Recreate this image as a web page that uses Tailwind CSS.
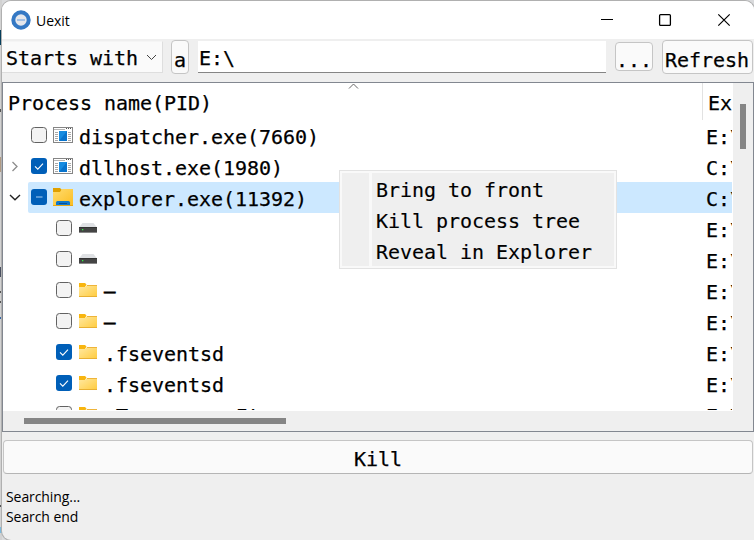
<!DOCTYPE html>
<html lang="en">
<head>
<meta charset="utf-8">
<title>Uexit</title>
<script src="https://cdn.jsdelivr.net/npm/@tailwindcss/browser@4"></script>
</head>
<body class="w-[754px] h-[540px] overflow-hidden bg-[#d9dadc] text-black">
<svg class="absolute w-0 h-0">
  <symbol id="off" viewBox="0 0 16 16"><rect x=".5" y=".5" width="15" height="15" rx="3" fill="#f3f3f3" stroke="#626262"/></symbol>
  <symbol id="on" viewBox="0 0 16 16"><rect width="16" height="16" rx="3" fill="#005fb8"/><path d="M4 8.300l2.800 2.800L12 5.700" fill="none" stroke="#fff" stroke-width="1.100"/></symbol>
  <symbol id="part" viewBox="0 0 16 16"><rect width="16" height="16" rx="3" fill="#005fb8"/><path d="M5 8h6.500" stroke="#a9cdf0" stroke-width="1.200"/></symbol>
  <symbol id="app" viewBox="0 0 20 16"><rect x=".5" y=".5" width="19" height="15" fill="#fff" stroke="#858585"/><path d="M1 2.500h11" stroke="#b5b5b5"/><path d="M13 1.500h1M15 1.500h1M17 1.500h1" stroke="#555"/><path d="M2 5.500h3M2 7.500h3M2 9.500h3M2 11.500h3M2 13.500h3M15 5.500h3M15 7.500h3M15 9.500h3M15 11.500h3M15 13.500h3" stroke="#a8a8a8"/><rect x="6" y="4" width="8" height="10" fill="#168be0"/><path d="M14 4v10H6z" fill="#0873cc"/></symbol>
  <linearGradient id="g" x1="0" y1="0" x2="1" y2="1"><stop offset="0" stop-color="#ffe9a3"/><stop offset="1" stop-color="#ffcb3d"/></linearGradient>
  <linearGradient id="g2" x1="0" y1="0" x2="1" y2="1"><stop offset="0" stop-color="#ffdc70"/><stop offset="1" stop-color="#fbbd20"/></linearGradient>
  <symbol id="folder" viewBox="0 0 18 14"><path d="M0 0h6l1.500 1.500L6 4H0z" fill="#f8b50f"/><path d="M0 4h6l2-2h10v12H0z" fill="url(#g)"/><path d="M8 2.500h10" stroke="#eeb43a"/><path d="M0 13.500h18" stroke="#e8b033"/></symbol>
  <symbol id="exp" viewBox="0 0 20 18"><path d="M0 0h7l2 2-2 3H0z" fill="#e0a000"/><path d="M0 4h7l2-3h11v17H0z" fill="url(#g2)"/><path d="M0 17.500h20" stroke="#e8a815"/><path d="M3 17v-2.500q0-1.500 1.500-1.500h11q1.500 0 1.500 1.500V17z" fill="#0f78cc"/><path d="M6 15.500h8" stroke="#0a4f91"/></symbol>
  <symbol id="drive" viewBox="0 0 18 10"><path d="M3.500 0h11L18 4.500H0z" fill="#dfe1e4"/><rect y="4" width="18" height="6" fill="#444"/><path d="M0 9.500h18" stroke="#888"/><path d="M0 4.500h18" stroke="#333"/><rect x="3" y="6" width="1.300" height="1.300" fill="#35f045"/></symbol>
</svg>
<div class="relative flex w-[754px] h-[540px]">
  <div class="w-[2px] shrink-0 flex flex-col bg-[#d2d2d2]">
    <div class="h-[30px]"></div><div class="h-[15px] bg-[#063e5b]"></div><div class="h-[64px]"></div><div class="h-[3px] bg-[#555]"></div><div class="h-[45px]"></div><div class="h-[15px] bg-[#b09a83]"></div><div class="h-[95px]"></div><div class="h-[10px] bg-[#4b5060]"></div><div class="h-[14px]"></div><div class="h-[2px] bg-[#555]"></div><div class="h-[8px]"></div><div class="h-[2px] bg-[#555]"></div><div class="h-[14px]"></div><div class="h-[2px] bg-[#3565a5]"></div><div class="h-[186px]"></div><div class="h-[2px] bg-[#555]"></div><div class="h-[20px]"></div><div class="h-[6px] bg-[#7cb9dc]"></div>
  </div>
  <div class="w-[752px] h-[540px] pt-px">
  <div class="w-[752px] h-[539px] rounded-t-[9px] rounded-bl-[9px] overflow-hidden bg-[#efefef] flex flex-col shadow-[0_0_0_1px_#b0b0b0]">
    <header class="h-[38px] shrink-0 bg-white flex items-center">
      <svg class="ml-[9px] w-[20px] h-[20px]" viewBox="0 0 20 20"><circle cx="10" cy="10" r="7.700" fill="#e5e7ec" stroke="#3478c4" stroke-width="4"/><path d="M6 10h8" stroke="#8db4e4" stroke-width="1.500"/></svg>
      <span class="ml-[5px] mt-px text-[14px] leading-[20px] tracking-[-0.05px] font-['Open_Sans',sans-serif]">Uexit</span>
      <svg class="ml-auto mr-[22px] w-[132px] h-[14px]" viewBox="0 0 132 14" fill="none" stroke="#000"><path d="M1 6.500h12" stroke-width="1.100"/><rect x="59.600" y="1.600" width="10.800" height="10.800" rx="1" stroke-width="1.300"/><path d="M118.300 1.300l11.400 11.400M129.700 1.300l-11.400 11.400" stroke-width="1.200"/></svg>
    </header>
    <div class="h-[43px] shrink-0 flex items-start pt-[2px] font-['DejaVu_Sans_Mono',monospace] text-[20px] tracking-[-0.04px] [-webkit-text-stroke:0.25px_#000] whitespace-nowrap">
      <div class="w-[161px] h-[32px] bg-[#fafafa] border border-l-0 border-t-[#f5f5f5] border-[#dedede] flex items-center">
        <span class="ml-[4px] pt-[2px] leading-[26px]">Starts with</span>
        <svg class="ml-[8px] mb-[1px] w-[11px] h-[8px]" viewBox="0 0 11 8" fill="none" stroke="#444"><path d="M1 2l4.500 4.500L10 2"/></svg>
      </div>
      <div class="-mt-px ml-[8px] w-[18px] h-[34px] rounded-[4px] border border-[#c5c5c5] bg-[#fafafa] flex items-center justify-center"><span class="pt-[6px] leading-[26px]">a</span></div>
      <div class="ml-[9px] w-[408px] h-[32px] bg-white border-b border-[#858585] flex items-center"><span class="ml-[1px] pt-[2px] leading-[26px]">E:\</span></div>
      <div class="mt-[1px] ml-[9px] w-[38px] h-[29px] rounded-[4px] border border-[#c5c5c5] bg-[#fafafa] flex items-center justify-center"><span class="pt-[6px] leading-[22px]">...</span></div>
      <div class="-mt-px ml-[9px] w-[91px] h-[34px] rounded-[4px] border border-[#c5c5c5] bg-[#fafafa] flex items-center justify-center"><span class="pt-[5px] pr-px leading-[26px]">Refresh</span></div>
    </div>
    <main class="w-[752px] h-[350px] shrink-0 border border-[#828790] flex flex-col font-['DejaVu_Sans_Mono',monospace] text-[20px] leading-[28px] tracking-[-0.04px] [-webkit-text-stroke:0.25px_#000] whitespace-nowrap">
      <div class="h-[328px] flex">
        <div class="w-[730px] h-[328px] shrink-0 overflow-hidden bg-white">
          <div class="relative h-[37px] flex">
            <div class="w-[700px] shrink-0 h-[37px] border-r border-[#e2e2e2] pl-[5px] pt-[6px]">Process name(PID)</div>
            <div class="pl-[5px] pt-[6px]">Ex</div>
            <svg class="absolute left-[345px] top-0 w-[11px] h-[7px]" viewBox="0 0 11 7" fill="none" stroke="#666"><path d="M1 5.500L5.500 1L10 5.500"/></svg>
          </div>
          <div class="h-[31px] flex"><div class="w-[703px] shrink-0 flex pl-[28px]"><svg class="mt-[7px] w-4 h-4"><use href="#off"/></svg><svg class="ml-[6px] mt-[7px] w-[20px] h-[16px]"><use href="#app"/></svg><span class="ml-[6px] pt-[3px]">dispatcher.exe(7660)</span></div><span class="w-[26px] overflow-hidden pt-[3px]">E:\</span></div>
          <div class="h-[31px] flex"><div class="w-[703px] shrink-0 flex pl-[7px]"><svg class="mt-[9px] w-[10px] h-[13px]" viewBox="0 0 10 13" fill="none" stroke="#8c8c8c" stroke-width="1.300"><path d="M2.500 2l4.500 4.500L2.500 11"/></svg><svg class="ml-[11px] mt-[7px] w-4 h-4"><use href="#on"/></svg><svg class="ml-[6px] mt-[7px] w-[20px] h-[16px]"><use href="#app"/></svg><span class="ml-[6px] pt-[3px]">dllhost.exe(1980)</span></div><span class="w-[26px] overflow-hidden pt-[3px]">C:\</span></div>
          <div class="h-[31px] flex"><svg class="ml-[6px] mt-[11px] w-[12px] h-[9px] shrink-0" viewBox="0 0 12 9" fill="none" stroke="#222" stroke-width="1.400"><path d="M1 2l5 4.700L11 2"/></svg><div class="ml-[7px] w-[704px] shrink-0 h-[31px] rounded-l-[2px] bg-[#cce8ff] flex"><div class="w-[678px] shrink-0 flex pl-[3px]"><svg class="mt-[7px] w-4 h-4"><use href="#part"/></svg><svg class="ml-[6px] mt-[6px] w-[20px] h-[18px]"><use href="#exp"/></svg><span class="ml-[6px] pt-[3px]">explorer.exe(11392)</span></div><span class="w-[26px] overflow-hidden pt-[3px]">C:\</span></div></div>
          <div class="h-[31px] flex"><div class="w-[703px] shrink-0 flex pl-[53px]"><svg class="mt-[7px] w-4 h-4"><use href="#off"/></svg><svg class="ml-[7px] mt-[10px] w-[18px] h-[10px]"><use href="#drive"/></svg></div><span class="w-[26px] overflow-hidden pt-[3px]">E:\</span></div>
          <div class="h-[31px] flex"><div class="w-[703px] shrink-0 flex pl-[53px]"><svg class="mt-[7px] w-4 h-4"><use href="#off"/></svg><svg class="ml-[7px] mt-[10px] w-[18px] h-[10px]"><use href="#drive"/></svg></div><span class="w-[26px] overflow-hidden pt-[3px]">E:\</span></div>
          <div class="h-[31px] flex"><div class="w-[703px] shrink-0 flex pl-[53px]"><svg class="mt-[7px] w-4 h-4"><use href="#off"/></svg><svg class="ml-[7px] mt-[8px] w-[18px] h-[14px]"><use href="#folder"/></svg><span class="ml-[7px] pt-[2px] text-[19px] [-webkit-text-stroke:0.7px_#000]">–</span></div><span class="w-[26px] overflow-hidden pt-[3px]">E:\</span></div>
          <div class="h-[31px] flex"><div class="w-[703px] shrink-0 flex pl-[53px]"><svg class="mt-[7px] w-4 h-4"><use href="#off"/></svg><svg class="ml-[7px] mt-[8px] w-[18px] h-[14px]"><use href="#folder"/></svg><span class="ml-[7px] pt-[2px] text-[19px] [-webkit-text-stroke:0.7px_#000]">–</span></div><span class="w-[26px] overflow-hidden pt-[3px]">E:\</span></div>
          <div class="h-[31px] flex"><div class="w-[703px] shrink-0 flex pl-[53px]"><svg class="mt-[7px] w-4 h-4"><use href="#on"/></svg><svg class="ml-[7px] mt-[8px] w-[18px] h-[14px]"><use href="#folder"/></svg><span class="ml-[7px] pt-[3px]">.fseventsd</span></div><span class="w-[26px] overflow-hidden pt-[3px]">E:\</span></div>
          <div class="h-[31px] flex"><div class="w-[703px] shrink-0 flex pl-[53px]"><svg class="mt-[7px] w-4 h-4"><use href="#on"/></svg><svg class="ml-[7px] mt-[8px] w-[18px] h-[14px]"><use href="#folder"/></svg><span class="ml-[7px] pt-[3px]">.fseventsd</span></div><span class="w-[26px] overflow-hidden pt-[3px]">E:\</span></div>
          <div class="h-[11px] overflow-hidden flex"><div class="w-[703px] shrink-0 flex pl-[53px]"><svg class="mt-[7px] w-4 h-4 shrink-0"><use href="#off"/></svg><svg class="ml-[7px] mt-[8px] w-[18px] h-[14px] shrink-0"><use href="#folder"/></svg><span class="ml-[7px] pt-[3px]">.Temporary.Items</span></div><span class="w-[26px] overflow-hidden pt-[3px]">E:\</span></div>
        </div>
        <div class="w-[20px] h-[328px] bg-[#efefef] pt-[21px] pl-[7px]"><div class="w-[6px] h-[45px] bg-[#858585]"></div></div>
      </div>
      <div class="h-[20px] bg-[#efefef] pt-[7px] pl-[21px]"><div class="w-[262px] h-[6px] bg-[#858585]"></div></div>
    </main>
    <button class="mt-[8px] ml-px w-[750px] h-[34px] shrink-0 rounded-[4px] border border-[#c5c5c5] border-b-[#b5b5b5] bg-[#fafafa] font-['DejaVu_Sans_Mono',monospace] text-[20px] leading-[26px] pt-[4px] tracking-[-0.04px] [-webkit-text-stroke:0.25px_#000]">Kill</button>
    <footer class="pt-[13px] pl-[4px] font-['Open_Sans',sans-serif] text-[14px] leading-[20px] tracking-[-0.08px]"><p>Searching...</p><p>Search end</p></footer>
  </div>
  </div>
  <div class="absolute left-[339px] top-[170px] w-[278px] h-[99px] border border-[#e2e2e2] bg-[#f9f9f9] p-[2px] flex gap-[3px] font-['DejaVu_Sans_Mono',monospace] text-[20px] leading-[31px] tracking-[-0.04px] [-webkit-text-stroke:0.15px_#000] whitespace-nowrap">
    <div class="w-[27px] bg-[#efefef]"></div>
    <ul class="flex-1 bg-[#efefef] pl-[4px] pt-[2px]"><li class="h-[31px]">Bring to front</li><li class="h-[31px]">Kill process tree</li><li class="h-[31px]">Reveal in Explorer</li></ul>
  </div>
</div>
</body>
</html>
